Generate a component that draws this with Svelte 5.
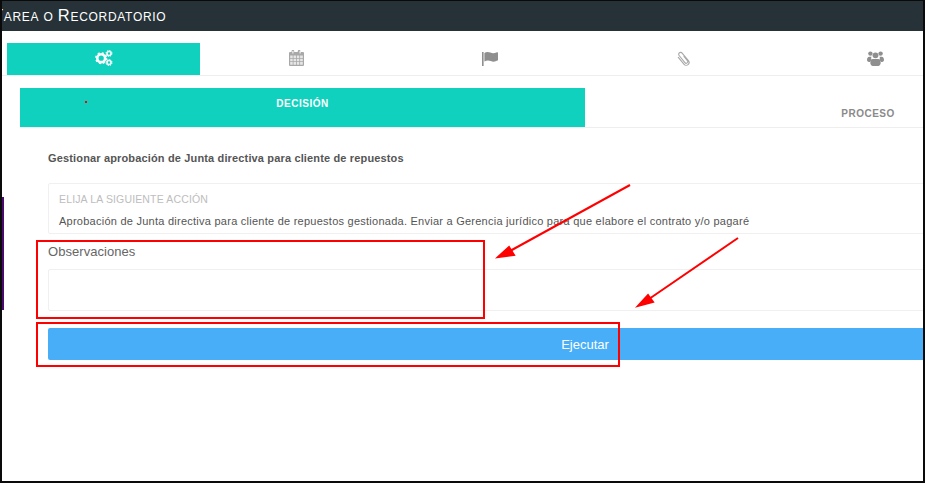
<script lang="ts">
  const tabs = ["cogs", "calendar", "flag", "clip", "users"];
  let observaciones = $state("");
</script>

<div class="frame">
  <header class="title-bar"><h1>Tarea o Recordatorio</h1></header>

  <nav class="icon-tabs">
    {#each tabs as tab, i}
      <div class="icon-tab" class:active={i === 0}>
        {#if tab === "cogs"}
          <svg width="18" height="16" viewBox="0 0 18 16" aria-hidden="true">
            <circle cx="6.2" cy="8.2" r="3.9" fill="none" stroke="#fff" stroke-width="2.6" />
            <circle cx="6.2" cy="8.2" r="5.3" fill="none" stroke="#fff" stroke-width="1.6" stroke-dasharray="2 2.16" />
            <circle cx="14" cy="3.4" r="2" fill="none" stroke="#fff" stroke-width="1.5" />
            <circle cx="14" cy="3.4" r="3" fill="none" stroke="#fff" stroke-width="1" stroke-dasharray="1.3 1.05" />
            <circle cx="14" cy="12.6" r="2" fill="none" stroke="#fff" stroke-width="1.5" />
            <circle cx="14" cy="12.6" r="3" fill="none" stroke="#fff" stroke-width="1" stroke-dasharray="1.3 1.05" />
          </svg>
        {:else if tab === "calendar"}
          <svg width="15" height="16" viewBox="0 0 15 16" aria-hidden="true">
            <path fill="#a8a8a8" d="M1 2h1.6V1a1 1 0 0 1 1-1h.6a1 1 0 0 1 1 1v1h3.6V1a1 1 0 0 1 1-1h.6a1 1 0 0 1 1 1v1H14a1 1 0 0 1 1 1v12a1 1 0 0 1-1 1H1a1 1 0 0 1-1-1V3a1 1 0 0 1 1-1z" />
            <path fill="#e6e6e6" d="M1.200 5.600h2.500v2.500H1.200zM4.500 5.600h2.500v2.500H4.500zM7.800 5.600h2.500v2.500H7.800zM11.100 5.600h2.700v2.500h-2.700zM1.200 8.800h2.500v2.500H1.200zM4.500 8.800h2.500v2.500H4.500zM7.800 8.800h2.500v2.500H7.800zM11.100 8.800h2.700v2.500h-2.700zM1.200 12h2.500v2.700H1.200zM4.500 12h2.500v2.700H4.500zM7.800 12h2.500v2.700H7.800zM11.100 12h2.700v2.700h-2.700z" />
            <path fill="#fff" d="M3.400 1h1v2.400h-1zM10.600 1h1v2.400h-1z" />
          </svg>
        {:else if tab === "flag"}
          <svg width="16" height="15" viewBox="0 0 16 15" aria-hidden="true">
            <path fill="#8f8f8f" d="M0 1h1.600v14H0zM2.400 2c2-1.400 4-1.200 6-.4s3.800.9 6.600-.4c.6-.2 1 0 1 .6v7.400c-2.600 1.600-5 1.800-7.200.9s-4.200-.8-6.400.4z" />
          </svg>
        {:else if tab === "clip"}
          <svg width="14" height="15" viewBox="0 0 14 15" aria-hidden="true">
            <path fill="none" stroke="#a8a8a8" stroke-width="1.100" stroke-linecap="round" d="M8 5.500 11.400 9.600a1.600 1.600 0 0 1-2.500 2L3.100 4.500a1.900 1.900 0 0 1 3-2.400l6.300 7.600a2.800 2.800 0 0 1-4.300 3.600L2.300 6.400" />
          </svg>
        {:else}
          <svg width="17" height="15" viewBox="0 0 17 15" aria-hidden="true">
            <g fill="#8f8f8f">
              <circle cx="3.400" cy="2.600" r="2.200" />
              <circle cx="13.600" cy="2.600" r="2.200" />
              <circle cx="8.500" cy="4.300" r="2.900" />
              <path d="M0 9c0-2 .8-3.300 2.300-3.300h2.200c-.5 1-.4 2.600.2 3.500-.9.400-1.500 1-1.800 1.800C1.300 11 0 10.400 0 9zM17 9c0-2-.8-3.300-2.300-3.300h-2.200c.5 1 .4 2.600-.2 3.500.9.400 1.500 1 1.800 1.800C15.700 11 17 10.400 17 9z" />
              <path d="M5.800 8h5.400c1.600 0 2.500 1.700 2.500 3.800 0 1.800-1.100 3.200-2.500 3.200H5.800c-1.400 0-2.500-1.400-2.500-3.200C3.300 9.700 4.200 8 5.800 8z" />
            </g>
          </svg>
        {/if}
      </div>
    {/each}
  </nav>

  <div class="step-tabs">
    <div class="step current">
      <i class="mark"></i>
      <span>DECISIÓN</span>
    </div>
    <div class="step other"><span>PROCESO</span></div>
  </div>

  <main class="content">
    <h2>Gestionar aprobación de Junta directiva para cliente de repuestos</h2>

    <section class="action-box">
      <p class="action-label">ELIJA LA SIGUIENTE ACCIÓN</p>
      <p class="action-text">Aprobación de Junta directiva para cliente de repuestos gestionada. Enviar a Gerencia jurídico para que elabore el contrato y/o pagaré</p>
    </section>

    <label class="obs-label" for="obs">Observaciones</label>
    <textarea id="obs" bind:value={observaciones}></textarea>

    <button type="button" class="run">Ejecutar</button>
  </main>

  <!-- screenshot annotations -->
  <i class="side-strip"></i>
  <i class="callout obs-callout"></i>
  <i class="callout run-callout"></i>
  <svg class="arrows" width="925" height="483" viewBox="0 0 925 483" aria-hidden="true">
    <g stroke="#f00" stroke-width="2" fill="#f00">
      <path d="M630 185 510 251" fill="none" />
      <path d="M498 257 509 247 514 255z" />
      <path d="M738 238 649 299" fill="none" />
      <path d="M638 306 648 295 653 302z" />
    </g>
  </svg>
</div>

<style>
  :global(body) {
    margin: 0;
    background: #fff;
  }

  .frame {
    position: relative;
    box-sizing: border-box;
    width: 925px;
    height: 483px;
    overflow: hidden;
    border: solid #0a0a0a;
    border-width: 1px 2px 2px 2px;
    background: #fff;
    font-family: "Liberation Sans", Arial, sans-serif;
    color: #555;
  }

  .title-bar {
    height: 30px;
    display: flex;
    align-items: center;
    padding-bottom: 1px;
    box-sizing: border-box;
    background: #263238;
    overflow: hidden;
  }

  h1 {
    margin: 0 0 0 -9px;
    color: #fff;
    font-size: 16.500px;
    font-weight: 400;
    font-variant: small-caps;
    letter-spacing: 0.7px;
    word-spacing: -1px;
    white-space: nowrap;
  }

  .icon-tabs {
    display: grid;
    grid-template-columns: repeat(5, 193px);
    width: 921px;
    margin-top: 12px;
    padding-left: 5px;
    box-sizing: border-box;
    border-bottom: 1px solid #eee;
    height: 33px;
  }

  .icon-tab {
    display: flex;
    align-items: center;
    justify-content: center;
    height: 32px;
    padding-bottom: 2px;
    box-sizing: border-box;
  }

  .icon-tab.active {
    background: #0fd1bd;
  }

  .step-tabs {
    display: flex;
    margin: 12px 0 0 18px;
    height: 40px;
    border-bottom: 1px solid #eee;
    box-sizing: border-box;
  }

  .step {
    position: relative;
    flex: none;
    font-size: 10px;
    font-weight: 700;
    letter-spacing: 0.5px;
    text-align: center;
    box-sizing: border-box;
  }

  .step.current {
    width: 565px;
    background: #0fd1bd;
    color: #fff;
    padding-top: 10px;
  }

  .step.other {
    width: 566px;
    color: #8a8a8a;
    padding-top: 20px;
  }

  .mark {
    position: absolute;
    left: 65px;
    top: 13px;
    width: 2px;
    height: 2px;
    background: #f00;
  }

  .content {
    padding: 23px 0 0 46px;
    width: 1120px;
    box-sizing: border-box;
  }

  h2 {
    margin: 0;
    font-size: 11px;
    line-height: 14px;
    font-weight: 700;
    letter-spacing: 0.15px;
    color: #555;
  }

  .action-box {
    margin-top: 18px;
    height: 51px;
    box-sizing: border-box;
    border: 1px solid #f0f0f0;
    border-radius: 2px;
    padding: 8px 10px 0;
  }

  .action-box p {
    margin: 0;
    line-height: 14px;
  }

  .action-label {
    color: #bdbdbd;
    font-size: 10.500px;
    letter-spacing: 0.15px;
  }

  .action-box .action-text {
    margin-top: 8px;
    color: #555;
    font-size: 11px;
    letter-spacing: 0.25px;
  }

  .obs-label {
    display: block;
    margin-top: 10px;
    font-size: 13px;
    line-height: 16px;
    letter-spacing: 0.05px;
    color: #666;
  }

  textarea {
    display: block;
    width: 100%;
    height: 42px;
    margin: 9px 0 0;
    box-sizing: border-box;
    border: 1px solid #f0f0f0;
    border-radius: 2px;
    background: #fff;
    resize: none;
    outline: none;
  }

  .run {
    display: block;
    width: 100%;
    height: 32px;
    margin-top: 17px;
    border: 0;
    border-radius: 2px;
    background: #47aef7;
    color: #fff;
    font: inherit;
    font-size: 13px;
  }

  .side-strip {
    position: absolute;
    left: -1px;
    top: 196px;
    width: 3px;
    height: 113px;
    background: #4b0a70;
  }

  .callout {
    position: absolute;
    box-sizing: border-box;
    border: 2px solid #f00;
  }

  .obs-callout {
    left: 34px;
    top: 239px;
    width: 449px;
    height: 79px;
  }

  .run-callout {
    left: 34px;
    top: 321px;
    width: 584px;
    height: 45px;
  }

  .arrows {
    position: absolute;
    left: -2px;
    top: -1px;
    pointer-events: none;
  }
</style>
